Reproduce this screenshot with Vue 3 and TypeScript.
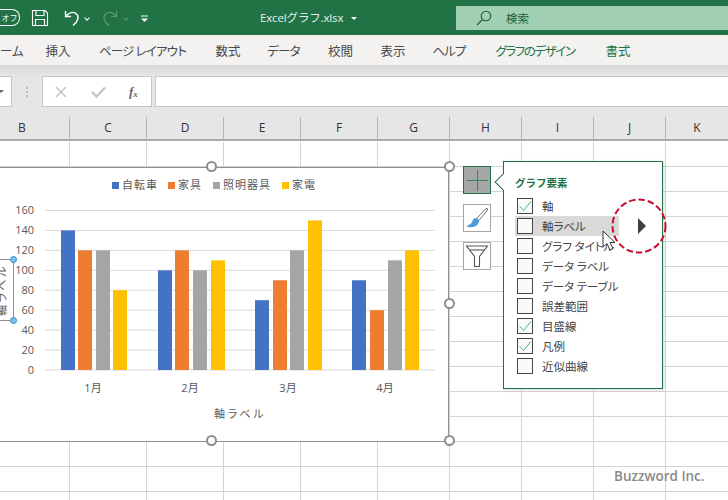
<script setup lang="ts">
const tabs = [
  { t: 'ーム', w: 31, first: true }, { t: '挿入', w: 54 }, { t: 'ページ レイアウト', w: 115, k: 'kana' }, { t: '数式', w: 56 },
  { t: 'データ', w: 55, k: 'kana' }, { t: '校閲', w: 59 }, { t: '表示', w: 46 }, { t: 'ヘルプ', w: 66, k: 'kana' },
  { t: 'グラフのデザイン', w: 106, g: true, k: 'tight' }, { t: '書式', w: 60, g: true },
]
const cols = [
  { n: 'B', w: 95 }, { n: 'C', w: 77 }, { n: 'D', w: 77 }, { n: 'E', w: 77 }, { n: 'F', w: 77 },
  { n: 'G', w: 72 }, { n: 'H', w: 72 }, { n: 'I', w: 72 }, { n: 'J', w: 72 }, { n: 'K', w: 63 },
]
const rows = Array.from({ length: 15 })
const ticks = [160, 140, 120, 100, 80, 60, 40, 20, 0]
const y0 = 203
const perUnit = 0.997
const colors = ['#4472c4', '#ed7d31', '#a5a5a5', '#ffc000']
const legend = [
  { t: '自転車', c: colors[0], x: 112 },
  { t: '家具', c: colors[1], x: 168 },
  { t: '照明器具', c: colors[2], x: 213 },
  { t: '家電', c: colors[3], x: 282 },
]
const groups = [
  { m: '1月', cx: 93, x: [61, 78, 96, 113], v: [140, 120, 120, 80] },
  { m: '2月', cx: 190, x: [158, 175, 193, 211], v: [100, 120, 100, 110] },
  { m: '3月', cx: 288, x: [255, 273, 290, 308], v: [70, 90, 120, 150] },
  { m: '4月', cx: 385, x: [352, 370, 388, 405], v: [90, 60, 110, 120] },
]
const items = [
  { t: '軸', c: true }, { t: '軸ラベル', c: false, h: true }, { t: 'グラフ タイトル', c: false },
  { t: 'データ ラベル', c: false }, { t: 'データ テーブル', c: false }, { t: '誤差範囲', c: false },
  { t: '目盛線', c: true }, { t: '凡例', c: true }, { t: '近似曲線', c: false },
]
</script>

<template>
  <div class="app">
    <header class="title">
      <div class="qat">
        <span class="auto">オフ</span>
        <svg class="ic" width="18" height="18" viewBox="0 0 18 18" fill="none" stroke="#fff" stroke-width="1.1">
          <path d="M1.5 1.5H14L16.5 4V16.5H1.5Z" /><path d="M5 1.5V6.5H13V1.5M4.5 16.5V10.5H13.5V16.5" />
        </svg>
        <svg class="undo" width="18" height="18" viewBox="0 0 18 18" fill="none" stroke="#fff" stroke-width="1.4">
          <path d="M2.5 2V7.5H8M3 7C6 3.5 10 2.5 13 4.5C16.5 7 15.5 12 10 16.5" />
        </svg>
        <span class="caret w"></span>
        <svg class="redo" width="18" height="18" viewBox="0 0 18 18" fill="none" stroke="#5d9a77" stroke-width="1.2">
          <path d="M15.5 2V7.5H10M15 7C12 3.5 8 2.5 5 4.5C1.5 7 2.5 12 8 16.5" />
        </svg>
        <span class="caret d"></span>
        <svg class="more" width="8" height="8" viewBox="0 0 8 8" fill="#fff"><rect y="0.5" width="7" height="1" /><path d="M0 3.5H7L3.5 7Z" /></svg>
      </div>
      <div class="fname">Excelグラフ.xlsx <span class="fcaret"></span></div>
      <div class="search">
        <svg width="16" height="16" viewBox="0 0 16 16" fill="none" stroke="#1c5f3a" stroke-width="1.1">
          <circle cx="10" cy="6" r="4.8" /><path d="M6.5 9.5L1 15" />
        </svg>
        <span>検索</span>
      </div>
    </header>

    <nav class="tabs">
      <span v-for="tab in tabs" :key="tab.t" class="tab" :class="[tab.k, { green: tab.g, first: tab.first }]" :style="{ width: tab.w + 'px' }">{{ tab.t }}</span>
    </nav>

    <div class="fbar">
      <div class="namebox"><span></span></div>
      <div class="dots"><i></i><i></i><i></i></div>
      <div class="fbtns">
        <svg width="12" height="12" viewBox="0 0 12 12" stroke="#c4c4c4" stroke-width="1.5"><path d="M1 1L11 11M11 1L1 11" /></svg>
        <svg width="15" height="12" viewBox="0 0 15 12" fill="none" stroke="#c4c4c4" stroke-width="2.4"><path d="M1 6L5.5 10.5L14 1.5" /></svg>
        <span class="fx">f<sub>x</sub></span>
      </div>
      <div class="finput"></div>
    </div>

    <div class="headers">
      <span v-for="c in cols" :key="c.n" class="chead" :style="{ width: c.w + 'px' }">{{ c.n }}</span>
    </div>

    <main class="sheet">
      <div class="grid">
        <div v-for="(_, i) in rows" :key="i" class="row">
          <span v-for="c in cols" :key="c.n" class="cell" :style="{ width: c.w + 'px' }"></span>
        </div>
      </div>

      <div class="chart">
        <svg width="460" height="270" viewBox="0 0 460 270" class="chart-svg">
          <g v-for="l in legend" :key="l.t">
            <rect :x="l.x" y="15" width="7" height="7" :fill="l.c" />
            <text :x="l.x + 10" y="22" class="lg">{{ l.t }}</text>
          </g>
          <g v-for="t in ticks" :key="t">
            <line x1="45" x2="435" :y1="y0 - t * perUnit" :y2="y0 - t * perUnit" stroke="#d9d9d9" stroke-width="1" />
            <text x="34" :y="y0 - t * perUnit + 4" text-anchor="end" class="tick">{{ t }}</text>
          </g>
          <g v-for="g in groups" :key="g.m">
            <rect v-for="(v, i) in g.v" :key="i" :x="g.x[i]" :y="y0 - v * perUnit" width="14" :height="v * perUnit" :fill="colors[i]" />
            <text :x="g.cx" y="225" text-anchor="middle" class="tick">{{ g.m }}</text>
          </g>
          <text x="240" y="250.5" text-anchor="middle" class="ax">軸ラベル</text>
          <text x="6" y="123" text-anchor="middle" class="ax" transform="rotate(-90 6 123)">軸ラベル</text>
        </svg>
        <div class="ylabel-box"><i class="blue t"></i><i class="blue b"></i></div>
        <i class="h h1"></i><i class="h h2"></i><i class="h h3"></i><i class="h h4"></i><i class="h h5"></i>
      </div>

      <div class="side">
        <button class="sbtn on">
          <svg width="24" height="24" viewBox="0 0 24 24" stroke="#2f8a57" stroke-width="1"><path d="M12.5 2V23M2 12.5H23" /></svg>
        </button>
        <button class="sbtn">
          <svg width="24" height="24" viewBox="0 0 24 24">
            <path d="M11.5 12.5L21 2.5Q23 2 22.5 4L14 14.5Z" fill="#fff" stroke="#666" stroke-width="0.9" />
            <path d="M10.5 12C7.5 12.5 8 15.5 6 17.5C5 18.5 3 19 1.5 20.5C6 22 10.5 21 12.5 18.5C14 16.5 14.5 14.5 13.5 14Z" fill="#4a9bd8" />
          </svg>
        </button>
        <button class="sbtn">
          <svg width="24" height="24" viewBox="0 0 24 24" fill="none" stroke="#555" stroke-width="1.1"><path d="M1.5 2H22.5L14.5 12.5V22.5H9.5V12.5Z" /><path d="M5 6H19" /></svg>
        </button>
      </div>

      <section class="panel">
        <i class="notch"></i>
        <h3>グラフ要素</h3>
        <ul>
          <li v-for="it in items" :key="it.t" :class="{ hover: it.h }">
            <span class="cb">
              <svg v-if="it.c" width="14" height="14" viewBox="0 0 14 14" fill="none" stroke="#4fae72" stroke-width="1"><path d="M1.5 7L5.5 11.5L13 2.5" /></svg>
            </span>
            <span class="lbl">{{ it.t }}</span>
          </li>
        </ul>
        <i class="tri"></i>
      </section>

      <svg class="cursor" width="16" height="22" viewBox="0 0 16 22">
        <path d="M1 1V17L5 13.5L8 20L11 18.5L8 12.5H13Z" fill="#fff" stroke="#333" stroke-width="1" />
      </svg>
      <svg class="ring" width="60" height="60" viewBox="0 0 60 60" fill="none">
        <circle cx="30" cy="30" r="26.5" stroke="#c8102e" stroke-width="2" stroke-dasharray="6.5 3" />
      </svg>
      <div class="mark">Buzzword Inc.</div>
    </main>
  </div>
</template>

<style>
html, body { margin: 0; background: #fff; }
</style>

<style scoped>
.app { width: 728px; height: 500px; overflow: hidden; display: flex; flex-direction: column; font-family: "Noto Sans CJK JP", "Noto Sans", sans-serif; color: #444; }
.title { height: 35px; flex: none; background: #217346; display: flex; align-items: flex-start; color: #fff; }
.qat { width: 215px; flex: none; height: 35px; display: flex; align-items: center; }
.auto { width: 19px; height: 15px; margin-left: 0; border: 1px solid #fff; border-left: 0; border-radius: 0 8px 8px 0; font-size: 8px; line-height: 15px; text-align: center; box-sizing: content-box; }
.ic { margin-left: 11px; margin-top: 1px; }
.undo { margin-left: 14px; }
.caret { width: 3px; height: 3px; margin-left: 4px; margin-top: 1px; border-right: 1px solid; border-bottom: 1px solid; transform: rotate(45deg); }
.caret.w { color: #fff; }
.caret.d { color: #5d9a77; margin-left: 5px; }
.redo { margin-left: 12px; }
.more { margin-left: 13px; margin-top: 3px; }
.fname { width: 241px; flex: none; padding: 0 0 0 45px; box-sizing: border-box; height: 35px; line-height: 35px; font-size: 11.5px; font-family: "Open Sans", "Noto Sans CJK JP", sans-serif; color: #e8f1ec; letter-spacing: -0.15px; white-space: nowrap; }
.fcaret { display: inline-block; margin-left: 5px; vertical-align: 2px; border: 3px solid transparent; border-top-color: #fff; border-bottom: 0; }
.search { margin-top: 6px; height: 24px; flex: 1; background: #a0cfb2; display: flex; align-items: center; padding-left: 20px; color: #1c5f3a; font-size: 11.5px; }
.search span { margin-left: 14px; }
.tabs { height: 30px; flex: none; display: flex; align-items: center; background: #f3f2f1; font-size: 12.5px; color: #4a4a4a; font-feature-settings: "palt"; }
.tab { flex: none; text-align: center; white-space: nowrap; }
.tab.kana { letter-spacing: -0.8px; }
.tab.tight { letter-spacing: -1.4px; }
.tab.first { text-align: right; padding-right: 14px; box-sizing: border-box; }
.tab.green { color: #217346; }
.fbar { height: 42px; flex: none; box-sizing: border-box; padding: 11px 0 0; display: flex; align-items: flex-start; background: linear-gradient(#d6d6d6, #e6e6e6 11px); }
.namebox { width: 12px; height: 31px; box-sizing: border-box; background: #fff; border: 1px solid #c6c6c6; border-left: 0; flex: none; position: relative; }
.namebox span { position: absolute; left: 0; top: 13px; border: 3px solid transparent; border-top-color: #666; margin-left: -2px; }
.dots { width: 30px; flex: none; height: 31px; display: flex; flex-direction: column; align-items: center; justify-content: center; gap: 2px; }
.dots i { width: 2px; height: 2px; background: #bdbdbd; }
.fbtns { width: 110px; height: 31px; flex: none; box-sizing: border-box; background: #fff; border: 1px solid #c6c6c6; display: flex; align-items: center; padding-left: 12px; gap: 24px; }
.fx { font-family: "Liberation Serif", serif; font-style: italic; font-size: 13px; color: #666; line-height: 1; font-weight: 700; margin-left: -1px; }
.fx sub { font-size: 9px; vertical-align: -1px; }
.finput { margin-left: 3px; flex: 1; height: 31px; box-sizing: border-box; background: #fff; border: 1px solid #c6c6c6; border-right: 0; }
.headers { height: 34px; flex: none; box-sizing: border-box; padding-top: 10px; display: flex; background: #e6e6e6; border-bottom: 2px solid #ababab; position: relative; }
.chead { flex: none; box-sizing: border-box; height: 22px; border-right: 1px solid #b5b5b5; font-size: 12px; line-height: 22px; text-align: center; color: #333; font-family: "Open Sans", sans-serif; }
.chead:first-child { margin-left: -25px; }
.sheet { flex: 1; position: relative; }
.grid { padding-top: 1px; margin-left: -25px; }
.row { height: 25px; box-sizing: border-box; display: flex; border-bottom: 1px solid #d4d4d4; }
.cell { flex: none; box-sizing: border-box; height: 25px; border-right: 1px solid #d4d4d4; }
.chart { position: absolute; left: -20px; top: 25.5px; width: 469px; height: 275px; box-sizing: border-box; background: #fff; border: 1.5px solid #8e8e8e; border-left: 0; }
.chart-svg { position: absolute; left: 20px; top: -0.5px; overflow: hidden; }
.lg { font-size: 11px; fill: #595959; letter-spacing: 1px; font-family: "Noto Sans CJK JP", sans-serif; }
.ax { font-size: 11px; fill: #595959; letter-spacing: 2.5px; font-family: "Noto Sans CJK JP", sans-serif; font-feature-settings: "palt"; }
.tick { font-size: 11px; fill: #595959; font-family: "Open Sans", "Noto Sans CJK JP", sans-serif; }
.ylabel-box { position: absolute; left: 0; top: 91.5px; width: 34px; height: 62px; border: 1px solid #8e8e8e; border-left: 0; box-sizing: border-box; }
.blue { position: absolute; width: 5px; height: 5px; border-radius: 50%; background: #7cc0ec; border: 1px solid #3a8cc7; right: -4px; }
.blue.t { top: -4px; }
.blue.b { bottom: -4px; }
.h { position: absolute; width: 7px; height: 7px; border-radius: 50%; background: #fff; border: 2px solid #8e8e8e; }
.h1 { left: 226px; top: -6.5px; }
.h2 { left: 464px; top: -6.5px; }
.h3 { left: 464px; top: 130.5px; }
.h4 { left: 464px; top: 267.5px; }
.h5 { left: 226px; top: 267.5px; }
.side { position: absolute; left: 463px; top: 25px; display: flex; flex-direction: column; gap: 10px; }
.sbtn { width: 28px; height: 28px; padding: 0; box-sizing: border-box; border: 1px solid #a6a6a6; background: #fff; display: flex; align-items: center; justify-content: center; }
.sbtn.on { background: #a6a6a6; border-color: #217346; }
.panel { position: absolute; left: 503px; top: 20px; width: 160px; height: 228px; box-sizing: border-box; background: #fff; border: 1px solid #217346; box-shadow: 1px 1px 3px rgba(0,0,0,.15); padding: 13px 0 0 11px; }
.notch { position: absolute; left: -7px; top: 14px; width: 11px; height: 11px; background: #fff; border-left: 1px solid #217346; border-bottom: 1px solid #217346; transform: rotate(45deg); }
.panel h3 { margin: 0 0 6px; font-size: 10.5px; line-height: 15px; font-weight: 700; color: #217346; }
.panel ul { list-style: none; margin: 0; padding: 0; }
.panel li { height: 20px; width: 104px; display: flex; align-items: center; padding-left: 2px; box-sizing: border-box; }
.panel li.hover { background: #d9d9d9; }
.cb { width: 16px; height: 16px; flex: none; box-sizing: border-box; border: 1px solid #444; background: #fafafa; display: flex; align-items: center; justify-content: center; }
.lbl { margin-left: 9px; font-size: 11.5px; color: #444; white-space: nowrap; font-feature-settings: "palt"; }
.tri { position: absolute; left: 134px; top: 56px; border-left: 8px solid #404040; border-top: 8px solid transparent; border-bottom: 8px solid transparent; }
.cursor { position: absolute; left: 602px; top: 89px; }
.ring { position: absolute; left: 609px; top: 55px; }
.mark { position: absolute; left: 614px; top: 326px; font-family: "Open Sans", sans-serif; font-size: 13.5px; font-weight: 600; color: #8a8a8a; white-space: nowrap; }
</style>
